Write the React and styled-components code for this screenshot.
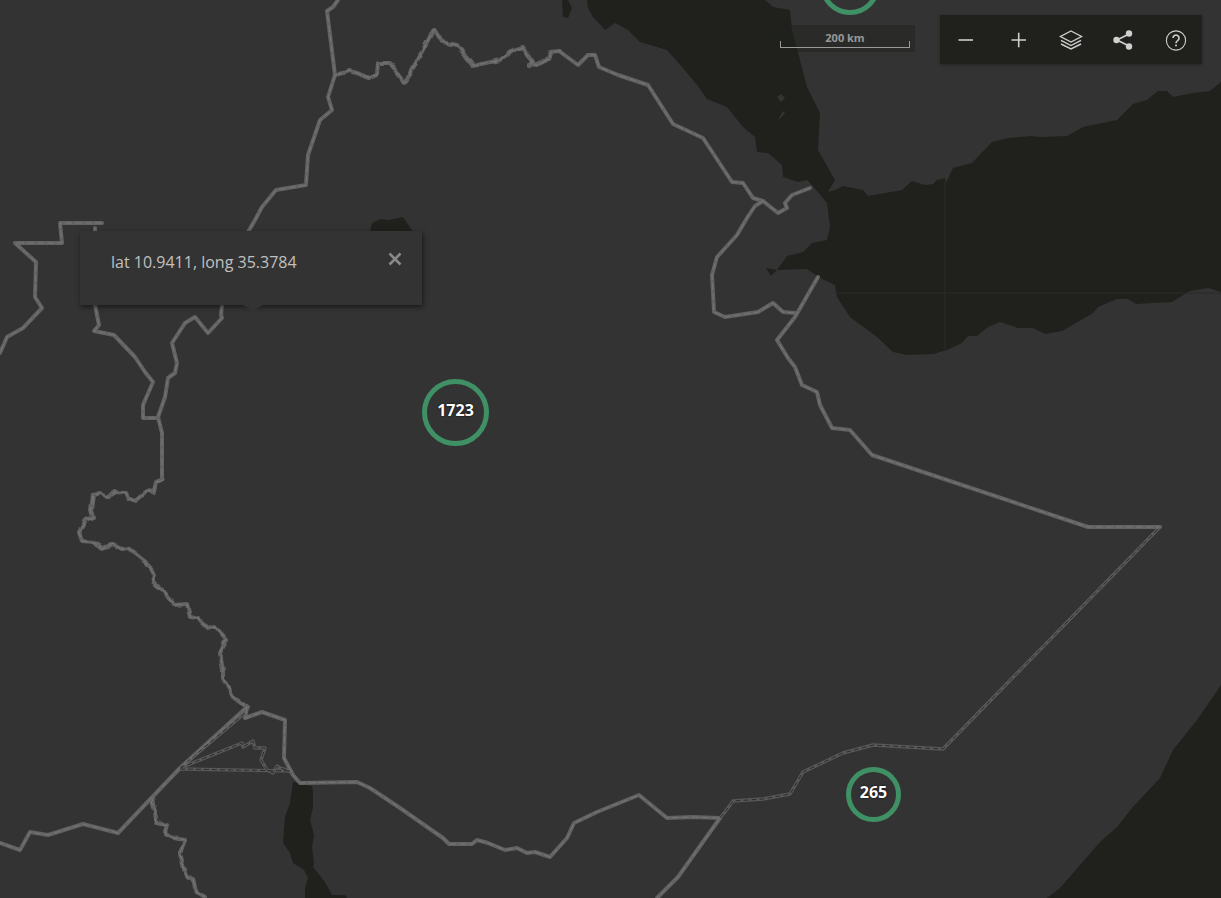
import React from "react";
import styled, { createGlobalStyle } from "styled-components";

const Global = createGlobalStyle`
  html, body { margin: 0; padding: 0; height: 100%; background: #333333; overflow: hidden; }
  #root { height: 100%; }
`;

const MapFrame = styled.div`
  position: relative;
  width: 100%;
  height: 100vh;
  min-height: 898px;
  overflow: hidden;
  background: #333333;
  font-family: "Open Sans", "Liberation Sans", sans-serif;
`;
const MapCanvas = styled.svg`
  position: absolute;
  inset: 0;
  display: block;
`;
const Water = styled.path`
  fill: #20211d;
`;
const Graticule = styled.path`
  fill: none;
  stroke: #2b2c28;
  stroke-width: 1;
`;
const Casing = styled.path`
  fill: none;
  stroke: ${(p) => (p.$thin ? "#585858" : "#626262")};
  stroke-width: ${(p) => (p.$thin ? 3.4 : 4)};
  stroke-linejoin: round;
  stroke-linecap: round;
`;
const Dash = styled.path`
  fill: none;
  stroke: ${(p) => (p.$thin ? "#2c2c2c" : "#767676")};
  stroke-width: 1;
  stroke-dasharray: ${(p) => (p.$thin ? "5 3" : "7 3")};
`;

const Marker = styled.div`
  position: absolute;
  left: ${(p) => p.$x}px;
  top: ${(p) => p.$y}px;
  width: ${(p) => p.$size}px;
  height: ${(p) => p.$size}px;
  box-sizing: border-box;
  border: 5px solid #3f9165;
  border-radius: 50%;
  display: flex;
  align-items: center;
  justify-content: center;
  color: #ffffff;
  font-size: 16px;
  font-weight: 700;
  padding-bottom: 5px;
  text-shadow: 0 0 2px #000;
`;

const Popup = styled.div`
  position: absolute;
  left: 80px;
  top: 231px;
  width: 342px;
  height: 74px;
  box-sizing: border-box;
  padding: 20px 31px;
  display: flex;
  justify-content: space-between;
  align-items: flex-start;
  background: #333333;
  box-shadow: 1px 2px 5px rgba(0, 0, 0, 0.55);
  color: #c0c0c0;
  font-size: 16px;
  line-height: 22px;
  &::after {
    content: "";
    position: absolute;
    left: 163px;
    bottom: -6px;
    width: 0;
    height: 0;
    border-left: 10px solid transparent;
    border-right: 10px solid transparent;
    border-top: 6px solid #333333;
  }
`;
const CloseButton = styled.button`
  position: absolute;
  top: 21px;
  right: 20px;
  width: 14px;
  height: 14px;
  padding: 0;
  border: 0;
  background: none;
  color: #8a8a8a;
  display: flex;
`;

const ScaleBox = styled.div`
  position: absolute;
  left: 775px;
  top: 25px;
  width: 140px;
  height: 27px;
  box-sizing: border-box;
  padding: 6px 5px 0 5px;
  background: rgba(32, 33, 29, 0.45);
  color: #989898;
  font-size: 11px;
  font-weight: 700;
  line-height: 14px;
  text-align: center;
`;
const ScaleLabel = styled.div`
  position: relative;
`;
const ScaleRule = styled.div`
  height: 7px;
  margin-top: -4px;
  box-sizing: border-box;
  border: 1px solid #9a9a9a;
  border-top: 0;
`;

const Toolbar = styled.div`
  position: absolute;
  left: 940px;
  top: 15px;
  width: 262px;
  height: 49px;
  display: flex;
  background: #20211d;
  box-shadow: 0 1px 3px rgba(0, 0, 0, 0.3);
`;
const ToolButton = styled.button`
  flex: 1;
  border: 0;
  padding: 1px 0 0;
  background: none;
  color: #cfcfcf;
  display: flex;
  align-items: center;
  justify-content: center;
`;

const lands = [
  "M587,0 L588,8 593,17 605,30 615,23 628,30 640,42 667,50 683,68 697,85 707,99 727,107 743,127 755,137 757,152 768,153 782,165 783,177 798,182 807,180 812,185 827,203 830,227 827,240 812,243 803,252 787,256 777,270 766,268 771,276 777,270 807,269 820,278 835,285 837,297 850,317 877,337 893,352 907,355 933,354 947,350 962,343 968,336 977,336 988,327 1000,322 1018,328 1033,328 1045,334 1062,331 1093,313 1098,307 1117,299 1128,299 1136,304 1172,302 1190,291 1208,288 1221,292 L1221,82 1210,91 1193,93 1173,97 1167,91 1158,91 1147,100 1133,104 1117,120 1083,127 1067,136 1040,137 1032,136 1008,138 992,142 972,163 953,168 946,183 945,178 937,180 933,184 925,185 912,181 902,190 885,193 868,196 863,190 843,186 835,190 828,192 835,180 818,150 820,113 807,87 800,60 792,30 790,10 773,7 765,0 Z",
  "M562,0 L563,17 568,18 572,8 568,0 Z",
  "M370,232 L372,223 380,219 388,220 403,217 413,232 Z",
  "M293,782 L312,786 313,793 313,807 310,820 314,835 312,847 314,863 313,867 325,882 332,895 345,895 347,898 305,898 305,888 308,878 304,870 293,863 290,853 283,843 285,817 290,803 Z",
  "M1221,685 L1197,720 1173,750 1160,778 1132,808 1117,827 1100,842 1060,888 1047,898 1221,898 Z",
];

const solid = [
  "M338,0 L333,7 327,11 335,75 328,97 332,110 320,120 308,155 306,185 276,190 262,207 255,220 248,232 235,270 222,305 221,315 222,318 208,333 195,317 185,323 172,343 177,363 175,373 168,378 165,397 158,417 162,433 162,479",
  "M247,707 L245,718 262,712 285,720 284,758 293,775 300,783 357,782 370,788 400,808 443,838 449,844 472,844 477,840 488,843 505,850 517,848 527,853 535,852 550,857 567,838 574,823 597,812 639,795 667,818 693,817 720,818",
  "M559,51 L578,65 588,55 595,55 599,67 618,75 648,85 673,124 703,138 732,182 743,183 753,198 763,201 778,213 787,208 785,203 792,195 810,188",
  "M763,201 L755,206 747,218 737,235 717,257 712,275 714,312 725,317 758,312 773,303 783,312 795,313",
  "M818,277 L795,317 777,340 788,358 795,367 802,385 817,392 820,405 832,428 850,430 872,455 1088,527 1160,527",
  "M102,223 L60,223 62,243 15,243 36,262 35,297 42,308 23,328 7,337 0,353",
  "M95,228 L95,305 99,325 94,331 114,335 135,357 145,372 153,382 143,405 143,418 158,418",
  "M720,818 L678,877 657,898",
  "M247,707 L180,768 118,833 83,824 48,835 30,832 20,850 0,843",
];

const rough = [
  "M162,479 L156,482 154,492 147,491 135,501 128,498 125,493 115,492 107,497 100,493 93,495 91,510 93,517 86,520 79,532 82,541 93,542 103,548 113,544 122,549 128,548 147,563 155,575 153,582 165,592 167,597 175,605 187,604 190,617 198,618 208,628 215,626 226,639 220,653 223,670 223,678 233,697 247,707",
  "M335,75 L350,71 370,78 377,75 378,63 390,63 405,83 434,29 442,42 457,45 473,66 500,60 513,50 523,47 532,62 530,66 548,60 550,52 559,51",
  "M152,798 L157,823 167,825 165,832 173,838 185,840 180,853 185,873 193,880 197,893 205,898",
];

const thin = [
  "M720,818 L725,812 733,801 763,799 790,794 803,772 843,753 873,745 943,749 1160,527",
  "M180,768 L245,713",
  "M180,768 L242,743 243,747 253,741 255,748 265,748 261,760 267,770 273,773 277,766 280,768 290,771",
  "M180,769 L290,771",
];

function Borders() {
  return (
    <>
      {thin.map((d) => <Casing key={d} d={d} $thin />)}
      {solid.map((d) => <Casing key={d} d={d} />)}
      <g filter="url(#wiggle)">
        {rough.map((d) => <Casing key={d} d={d} />)}
        {rough.map((d) => <Dash key={d} d={d} />)}
      </g>
      {thin.map((d) => <Dash key={d} d={d} $thin />)}
      {solid.map((d) => <Dash key={d} d={d} />)}
    </>
  );
}

const Icon = ({ children, size = 24 }) => (
  <svg width={size} height={size} viewBox="0 0 24 24" fill="none" stroke="currentColor" strokeWidth="1.4">
    {children}
  </svg>
);

export default function App() {
  return (
    <MapFrame>
      <Global />
      <MapCanvas width="1221" height="898" viewBox="0 0 1221 898">
        <defs>
          <filter id="wiggle" filterUnits="userSpaceOnUse" x="0" y="0" width="1221" height="898">
            <feTurbulence type="fractalNoise" baseFrequency="0.13" numOctaves="1" seed="4" />
            <feDisplacementMap in="SourceGraphic" scale="5" xChannelSelector="R" yChannelSelector="G" />
          </filter>
        </defs>
        {lands.map((d) => <Water key={d} d={d} />)}
        <Graticule d="M945,181 V350 M837,293 H1221" />
        <path d="M777,97 L781,94 785,98 781,102 Z M777,122 L783,111 785,113 Z" fill="#333333" />
        <Borders />
      </MapCanvas>

      <Marker $x={820} $y={-45} $size={60} />
      <Marker $x={422} $y={379} $size={67}>1723</Marker>
      <Marker $x={846} $y={767} $size={55}>265</Marker>

      <Popup>
        <span>lat 10.9411, long 35.3784</span>
        <CloseButton aria-label="close">
          <svg width="14" height="14" viewBox="0 0 14 14" fill="none" stroke="currentColor" strokeWidth="2.5">
            <path d="M1.5 1.5 L12.5 12.5 M12.5 1.5 L1.5 12.5" />
          </svg>
        </CloseButton>
      </Popup>

      <ScaleBox>
        <ScaleLabel>200 km</ScaleLabel>
        <ScaleRule />
      </ScaleBox>

      <Toolbar>
        <ToolButton aria-label="zoom out">
          <Icon><path d="M4.5 12 H19" strokeWidth="1.6" /></Icon>
        </ToolButton>
        <ToolButton aria-label="zoom in">
          <Icon><path d="M4.5 12 H19 M11.7 4.7 V19.3" strokeWidth="1.6" /></Icon>
        </ToolButton>
        <ToolButton aria-label="layers">
          <Icon>
            <path d="M12 3 L22.5 8.5 L12 14 L1.5 8.5 Z" />
            <path d="M2 12.3 L12 17.5 L22 12.3" />
            <path d="M2 16 L12 21 L22 16" />
          </Icon>
        </ToolButton>
        <ToolButton aria-label="share">
          <Icon>
            <path d="M6 12 L18 6 M6 12 L18 18" strokeWidth="1.8" />
            <circle cx="5.5" cy="12" r="3.2" fill="currentColor" stroke="none" />
            <circle cx="18" cy="5.5" r="3.2" fill="currentColor" stroke="none" />
            <circle cx="18" cy="18.5" r="3.2" fill="currentColor" stroke="none" />
          </Icon>
        </ToolButton>
        <ToolButton aria-label="help">
          <Icon>
            <circle cx="12" cy="12.5" r="9.6" strokeWidth="1.1" />
            <path d="M9 10 A3 3 0 1 1 13.6 12.6 C12.4 13.3 12 14 12 15.2" strokeWidth="1.6" />
            <circle cx="12" cy="17.6" r="1" fill="currentColor" stroke="none" />
          </Icon>
        </ToolButton>
      </Toolbar>
    </MapFrame>
  );
}
